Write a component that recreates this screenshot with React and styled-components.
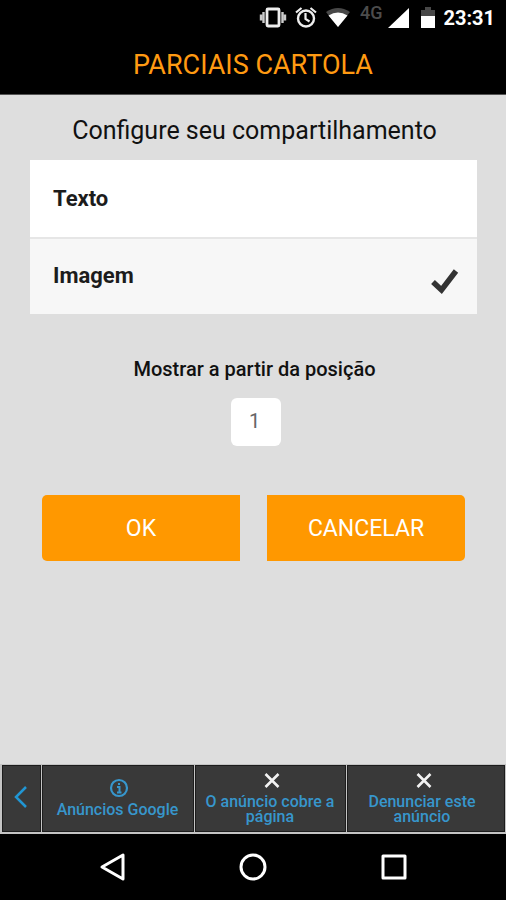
import React, { useState } from "react";
import styled, { createGlobalStyle } from "styled-components";

const GlobalStyle = createGlobalStyle`
  *, *::before, *::after { box-sizing: border-box; }
  body {
    margin: 0;
    background: #dedede;
    font-family: Roboto, "Noto Sans", sans-serif;
    color: #111;
  }
  button, input { font-family: inherit; }
`;

const Screen = styled.div`
  display: flex;
  flex-direction: column;
  min-height: 100vh;
`;

const StatusBar = styled.div`
  display: flex;
  align-items: center;
  justify-content: flex-end;
  height: 36px;
  padding-right: 11px;
  background: #000;
  color: #fff;
`;

const StatusIcons = styled.svg`
  width: ${(p) => p.$width}px;
  height: 36px;
`;

const NetworkLabel = styled.span`
  margin: 0 5px 10px 8px;
  color: #4c4c4c;
  font-size: 18px;
  font-weight: 500;
  line-height: 20px;
`;

const Clock = styled.time`
  margin-left: 7px;
  font-size: 20px;
  font-weight: 700;
  line-height: 36px;
`;

const Header = styled.header`
  display: flex;
  align-items: center;
  justify-content: center;
  height: 59px;
  background: #000;
  border-bottom: 1px solid #555;
`;

const Title = styled.h1`
  margin: 0;
  color: #ff9a12;
  font-size: 27px;
  font-weight: 400;
  line-height: 56px;
`;

const Main = styled.main`
  flex: 1;
  display: flex;
  flex-direction: column;
  padding: 20px 29px 0 30px;
`;

const Heading = styled.h2`
  margin: 0 0 13px;
  padding-left: 2px;
  font-size: 25px;
  font-weight: 400;
  line-height: 32px;
  text-align: center;
`;

const OptionList = styled.div`
  display: flex;
  flex-direction: column;
`;

const Option = styled.label`
  display: flex;
  align-items: center;
  justify-content: space-between;
  height: 77px;
  padding: 0 18px 0 23px;
  background: ${(p) => (p.$selected ? "#f7f7f7" : "#fff")};
  color: #1c1c1c;
  font-size: 22px;
  font-weight: 700;
  cursor: pointer;
  & + & { border-top: 2px solid #e6e6e6; padding-bottom: 2px; }
`;

const Radio = styled.input`
  position: absolute;
  opacity: 0;
  width: 1px;
  height: 1px;
  margin: 0;
`;

const CheckIcon = styled.svg`
  width: 30px;
  height: 28px;
  margin-top: 10px;
`;

const Field = styled.div`
  display: flex;
  flex-direction: column;
  align-items: center;
  gap: 17px;
  margin-top: 43px;
`;

const FieldLabel = styled.label`
  margin-left: 2px;
  font-size: 20px;
  font-weight: 500;
  line-height: 24px;
`;

const PositionInput = styled.input`
  width: 50px;
  height: 48px;
  margin-left: 4px;
  padding: 0 2px 2px 0;
  border: 0;
  border-radius: 6px;
  background: #fff;
  color: #666;
  font-size: 20px;
  text-align: center;
`;

const Actions = styled.div`
  display: flex;
  gap: 27px;
  margin: 49px 12px 0;
`;

const ActionButton = styled.button`
  flex: 1;
  height: 66px;
  padding: 0;
  border: 0;
  border-radius: ${(p) => (p.$side === "left" ? "5px 0 0 5px" : "0 5px 5px 0")};
  background: #ff9800;
  color: #fff;
  font-size: 23px;
  cursor: pointer;
`;

const AdBar = styled.aside`
  display: grid;
  grid-template-columns: 39px 152px 1fr 158px;
  gap: 1px;
  height: 70px;
  padding: 1px 1px 2px 2px;
  background: #c4c4c4;
`;

const AdButton = styled.button`
  display: flex;
  flex-direction: column;
  align-items: center;
  justify-content: center;
  padding: 0 ${(p) => (p.$last ? 8 : 1)}px 3px 0;
  border: 1px solid #1c1c1c;
  background: #393939;
  color: #3796cc;
  font-size: 16px;
  font-weight: 500;
  line-height: 15px;
  cursor: pointer;
`;

const AdIcon = styled.svg`
  width: 20px;
  height: 20px;
  margin: 0 0 4px 3px;
`;

const BackIcon = styled.svg`
  width: 14px;
  height: 24px;
`;

const NavBar = styled.nav`
  display: flex;
  align-items: center;
  justify-content: space-around;
  height: 66px;
  padding: 0 42px;
  background: #000;
`;

const NavButton = styled.button`
  display: flex;
  padding: 0;
  border: 0;
  background: none;
  cursor: pointer;
`;

const NavIcon = styled.svg`
  width: 32px;
  height: 32px;
  fill: none;
  stroke: #fff;
  stroke-width: 3;
  stroke-linejoin: round;
`;

function CrossIcon() {
  return (
    <AdIcon viewBox="0 0 20 20" aria-hidden="true">
      <path d="M3.500 4 16.500 17M16.500 4 3.500 17" stroke="#f2f2f2" strokeWidth="2.6" fill="none" />
    </AdIcon>
  );
}

function NotificationIcons() {
  return (
    <StatusIcons $width={94} viewBox="0 0 94 36" aria-hidden="true">
      <rect x="9" y="9" width="12" height="17" rx="1" fill="none" stroke="#eee" strokeWidth="2.8" />
      <path d="M3 14.500V20.500M5.500 12V23M24.500 12V23M27 14.500V20.500" stroke="#ccc" strokeWidth="2.4" />
      <circle cx="48" cy="18.500" r="8" fill="none" stroke="#eee" strokeWidth="2.4" />
      <path d="M47.500 13V19L51.500 21.500M38 12.500 43.500 8M58 12.500 52.500 8" fill="none" stroke="#eee" strokeWidth="2.2" />
      <path d="M68 12Q80 4 92 12L80 27Z" fill="#484848" />
      <path d="M70.500 15.500Q80 9.500 89.500 15.500L80 27Z" fill="#fff" />
    </StatusIcons>
  );
}

function SignalIcons() {
  return (
    <StatusIcons $width={49} viewBox="0 0 49 36" aria-hidden="true">
      <path d="M1 28 22 8V28Z" fill="#fff" />
      <path d="M34 16V10H38V7H44V10H48V16Z" fill="#484848" />
      <path d="M34 16H48V28H34Z" fill="#fff" />
    </StatusIcons>
  );
}

export default function App() {
  const [format, setFormat] = useState("Imagem");
  const [position, setPosition] = useState("1");

  return (
    <Screen>
      <GlobalStyle />
      <StatusBar>
        <NotificationIcons />
        <NetworkLabel>4G</NetworkLabel>
        <SignalIcons />
        <Clock>23:31</Clock>
      </StatusBar>
      <Header>
        <Title>PARCIAIS CARTOLA</Title>
      </Header>
      <Main>
        <Heading>Configure seu compartilhamento</Heading>
        <OptionList role="radiogroup" aria-label="Formato">
          {["Texto", "Imagem"].map((name) => (
            <Option key={name} $selected={format === name}>
              <Radio type="radio" name="format" value={name} checked={format === name} onChange={() => setFormat(name)} />
              {name}
              {format === name && (
                <CheckIcon viewBox="0 0 30 28" aria-hidden="true">
                  <path d="M4 15 12.500 23 27 4" fill="none" stroke="#333" strokeWidth="5.5" />
                </CheckIcon>
              )}
            </Option>
          ))}
        </OptionList>
        <Field>
          <FieldLabel htmlFor="position">Mostrar a partir da posição</FieldLabel>
          <PositionInput id="position" inputMode="numeric" value={position} onChange={(e) => setPosition(e.target.value)} />
        </Field>
        <Actions>
          <ActionButton type="button" $side="left">OK</ActionButton>
          <ActionButton type="button" $side="right">CANCELAR</ActionButton>
        </Actions>
      </Main>
      <AdBar>
        <AdButton type="button" aria-label="Voltar">
          <BackIcon viewBox="0 0 14 24" aria-hidden="true">
            <path d="M12 2 2 12 12 22" fill="none" stroke="#2196d3" strokeWidth="2.5" />
          </BackIcon>
        </AdButton>
        <AdButton type="button">
          <AdIcon viewBox="0 0 20 20" aria-hidden="true">
            <circle cx="10" cy="10" r="8" fill="none" stroke="#3796cc" strokeWidth="2.2" />
            <path d="M8 9H10.500V14M8 14.500H12.500M9 6H11" fill="none" stroke="#3796cc" strokeWidth="2" />
          </AdIcon>
          Anúncios Google
        </AdButton>
        <AdButton type="button">
          <CrossIcon />
          O anúncio cobre a página
        </AdButton>
        <AdButton type="button" $last>
          <CrossIcon />
          Denunciar este anúncio
        </AdButton>
      </AdBar>
      <NavBar>
        <NavButton type="button" aria-label="Voltar">
          <NavIcon viewBox="0 0 32 32"><path d="M6 16 27 4V28Z" /></NavIcon>
        </NavButton>
        <NavButton type="button" aria-label="Início">
          <NavIcon viewBox="0 0 32 32"><circle cx="16" cy="16" r="12" /></NavIcon>
        </NavButton>
        <NavButton type="button" aria-label="Recentes">
          <NavIcon viewBox="0 0 32 32"><rect x="5" y="5" width="22" height="22" /></NavIcon>
        </NavButton>
      </NavBar>
    </Screen>
  );
}
